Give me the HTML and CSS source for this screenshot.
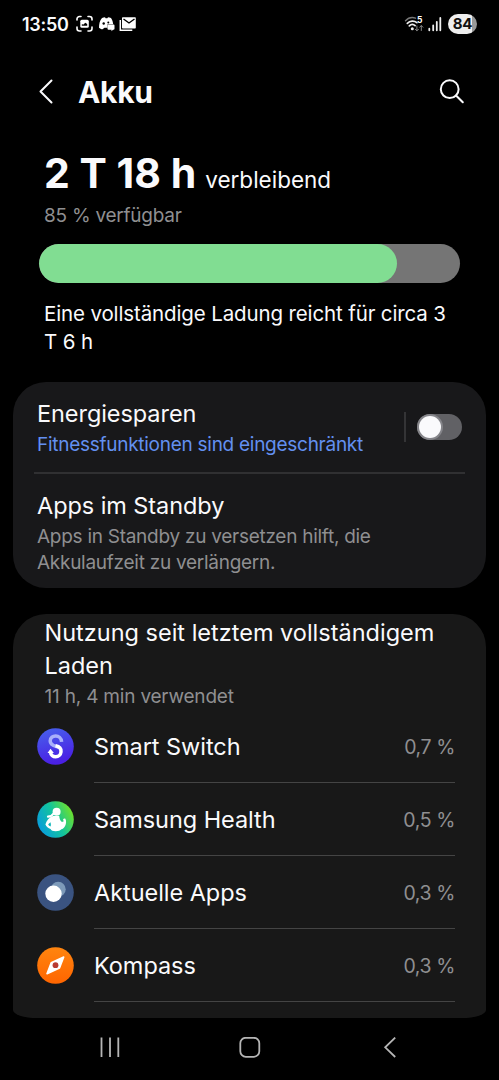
FILE: index.html
```html
<!DOCTYPE html>
<html lang="de">
<head>
<meta charset="utf-8">
<title>Akku</title>
<link rel="stylesheet" href="styles.css">
</head>
<body>
<div class="screen">
  <header class="status">
    <span class="clock">13:50</span>
    <svg class="status-left" width="62" height="18" viewBox="0 0 62 18">
      <g fill="none" stroke="#fff" stroke-width="1.6" stroke-linecap="round">
        <path d="M1 5V4a2.500 2.500 0 0 1 2.500-2.500H5M12 1.500h1.500A2.500 2.500 0 0 1 16 4v1M16 12v1.500A2.500 2.500 0 0 1 13.500 16H12M5 16H3.500A2.500 2.500 0 0 1 1 13.500V12"/>
      </g>
      <rect x="4.300" y="4.800" width="8.500" height="8" rx="1.500" fill="#fff"/>
      <path d="M5.800 10.800V9.300l1.800.3 1.600-1.900 2 1.200v1.900z" fill="#000"/>
      <path d="M26 3c1-.6 2-.8 3-.8l.6 1h1.800l.6-1c1 0 2 .2 3 .8 1.300 2 2 4 2.200 6.300h-5.700v3.500h-3l-2 1.500c-1.300-.2-2.600-.8-3.500-1.600 0-4 .8-7 3-9.700z" fill="#fff"/>
      <circle cx="27.700" cy="8.500" r="1.200" fill="#000"/><circle cx="32.300" cy="7.500" r="1" fill="#000"/>
      <path d="M32.500 9.500h5q1 0 1 1v3.300q0 1-1 1h-.5l-1.500 1.500v-1.500h-3q-1 0-1-1v-3.300q0-1 1-1z" fill="#fff"/>
      <path d="M44.300 5v10.200h12" fill="none" stroke="#fff" stroke-width="1.500"/>
      <rect x="46" y="2.200" width="13.800" height="11.400" rx=".8" fill="#fff"/>
      <path d="M47.500 4l5.500 4 5.500-4" fill="none" stroke="#000" stroke-width="1.400"/>
    </svg>
    <svg class="status-right" width="40" height="18" viewBox="0 0 40 18">
      <g fill="none" stroke-linecap="round">
        <path d="M1.500 5.800C4.300 2.800 8.500 2.100 11.500 3.200" stroke="#777" stroke-width="1.400"/>
        <path d="M3.300 8.300c2.700-2.800 7-2.900 9.600-.6M5.300 10.800c1.800-1.700 4.200-1.700 5.800-.1" stroke="#eee" stroke-width="1.700"/>
        <path d="M12.900 11v4.700m-1.600-1.500 1.600 1.600 1.600-1.600M17.300 15.500v-4.800m-1.600 1.500 1.600-1.600 1.600 1.600" stroke="#888" stroke-width="1"/>
        <path d="M25.300 13.700v1.600M29.200 10.500v4.800M32.800 6.800v8.500M36.300 3v12.300" stroke="#eee" stroke-width="1.800"/>
      </g>
      <circle cx="8.300" cy="13.800" r="1.500" fill="#eee"/>
      <text class="wifi-gen" x="12.900" y="8.300">5</text>
    </svg>
    <span class="battery">84</span>
  </header>

  <div class="title-bar">
    <svg width="16" height="26" viewBox="0 0 16 26"><path d="M13.500 1.500 2.500 12.500l11 11" class="line-icon"/></svg>
    <h1 class="title">Akku</h1>
    <svg width="26" height="26" viewBox="0 0 26 26"><circle cx="10.700" cy="10.200" r="8.900" class="line-icon"/><path d="m17 16.500 6.800 6.800" class="line-icon"/></svg>
  </div>

  <section class="summary">
    <div class="remaining"><strong class="time">2 T 18 h</strong><span class="left">verbleibend</span></div>
    <div class="available">85 % verfügbar</div>
    <div class="meter"><div class="meter-fill" style="width:85.1%"></div></div>
    <p class="forecast">Eine vollständige Ladung reicht für circa 3<br>T 6 h</p>
  </section>

  <section class="card settings">
    <div class="setting">
      <div class="setting-text">
        <div class="name">Energiesparen</div>
        <div class="detail accent">Fitnessfunktionen sind eingeschränkt</div>
      </div>
      <div class="switch-area"><div class="switch"><div class="knob"></div></div></div>
    </div>
    <div class="setting standby">
      <div class="setting-text">
        <div class="name">Apps im Standby</div>
        <div class="detail muted">Apps in Standby zu versetzen hilft, die<br>Akkulaufzeit zu verlängern.</div>
      </div>
    </div>
  </section>

  <section class="card usage">
    <h2 class="usage-title">Nutzung seit letztem vollständigem<br>Laden</h2>
    <div class="usage-time">11 h, 4 min verwendet</div>
    <ul class="apps">
      <li class="app">
        <svg width="37" height="37" viewBox="0 0 37 37">
          <defs><linearGradient id="switch-bg" x1="0" y1="0" x2=".3" y2="1"><stop stop-color="#4764ec"/><stop offset="1" stop-color="#4a20e4"/></linearGradient></defs>
          <circle cx="18.500" cy="18.500" r="18.300" fill="url(#switch-bg)"/>
          <path d="M24.600 13.900C24.200 6 13.200 6.300 13.200 13c0 5 5.200 4.700 8.600 6.400" fill="none" stroke="#a9b0fa" stroke-width="3.500"/>
          <path d="M18.500 17.800c3.800.7 5.800 2.700 5.500 6-.6 6.500-10 6.600-10.500.3" fill="none" stroke="#fff" stroke-width="3.500"/>
          <path d="m10.500 25 3-4.300 3.400 4.300z" fill="#fff"/>
        </svg>
        <div class="app-body"><span class="app-name">Smart Switch</span><span class="share">0,7 %</span></div>
      </li>
      <li class="app">
        <svg width="37" height="37" viewBox="0 0 37 37">
          <defs><linearGradient id="health-bg" x1="0" y1=".7" x2="1" y2=".2"><stop stop-color="#079be0"/><stop offset=".5" stop-color="#12c49c"/><stop offset="1" stop-color="#7be51c"/></linearGradient></defs>
          <circle cx="18.500" cy="18.500" r="18.300" fill="url(#health-bg)"/>
          <circle cx="19.600" cy="10.700" r="4" fill="#fff"/>
          <path d="M17 12c-1.500 2.300-3.700 3.700-6 3.700" fill="none" stroke="#fff" stroke-width="2.200" stroke-linecap="round"/>
          <path d="M16 15h6.200c.2 2.500 1 4.800 2.800 6l1.800-.7-.8-1.500c.5-1.200 1.500-1.500 2.400-1 1.200 2.500.9 5.700-.9 8.200-.8 1.100-1.900 1.900-3.100 2.200-1 1.300-3 2-5.700 2-2.800 0-4.600-.7-5.100-2.200-2.500-.8-4.200-2.200-5.200-4.500 1-3.900 3.800-7.200 7.600-8.500z" fill="#fff"/>
          <path d="m13.500 21.300-2.300 1.900c.4 1.200 1.300 1.800 2.500 2.200.3-1.300.2-2.800-.2-4.100z" fill="#0ab5ba"/>
        </svg>
        <div class="app-body"><span class="app-name">Samsung Health</span><span class="share">0,5 %</span></div>
      </li>
      <li class="app">
        <svg width="37" height="37" viewBox="0 0 37 37">
          <circle cx="18.500" cy="18.500" r="18.300" fill="#3a5380"/>
          <circle cx="21.200" cy="15.200" r="7.500" fill="#7d9ab9"/>
          <circle cx="16.500" cy="19.700" r="8.200" fill="#fff"/>
        </svg>
        <div class="app-body"><span class="app-name">Aktuelle Apps</span><span class="share">0,3 %</span></div>
      </li>
      <li class="app">
        <svg width="37" height="37" viewBox="0 0 37 37">
          <defs><linearGradient id="compass-bg" x1="0" y1="0" x2="0" y2="1"><stop stop-color="#ff850f"/><stop offset="1" stop-color="#ff6500"/></linearGradient></defs>
          <circle cx="18.500" cy="18.500" r="18.300" fill="url(#compass-bg)"/>
          <path d="M10 26.700 14.200 15.800 26.700 10 22.500 20.900z" fill="#fff" stroke="#fff" stroke-width="1.600" stroke-linejoin="round"/>
          <circle cx="18.500" cy="18.200" r="2.900" fill="#b93b32"/>
        </svg>
        <div class="app-body"><span class="app-name">Kompass</span><span class="share">0,3 %</span></div>
      </li>
    </ul>
  </section>

  <nav class="nav">
    <svg width="22" height="22" viewBox="0 0 22 22"><path d="M2.500 .5v19.500M11 .5v19.500M19.300 .5v19.500" class="nav-icon"/></svg>
    <svg width="22" height="22" viewBox="0 0 22 22"><rect x="1.300" y=".8" width="19" height="19" rx="5.500" class="nav-icon"/></svg>
    <svg width="22" height="22" viewBox="0 0 22 22"><path d="M17.200 .6 7.200 10.300l10 9.700" class="nav-icon"/></svg>
  </nav>
</div>
</body>
</html>
```
FILE: styles.css
```css
* { box-sizing: border-box; }
body {
  margin: 0;
  background: #000;
  color: #fafafc;
  font-family: Inter, "Liberation Sans", sans-serif;
}
h1, h2, p, ul { margin: 0; padding: 0; font-weight: 400; }
svg { display: block; flex: none; }
.screen {
  width: 499px;
  height: 1080px;
  overflow: hidden;
  display: flex;
  flex-direction: column;
  white-space: nowrap;
}

.status { height: 48px; padding: 0 22px; display: flex; align-items: center; }
.clock { font-size: 18px; font-weight: 600; letter-spacing: -.3px; width: 54px; }
.status-right { margin-left: auto; }
.wifi-gen { font-size: 8.500px; font-weight: 700; fill: #fff; }
.battery {
  margin-left: 4px;
  width: 29px;
  height: 20px;
  border-radius: 10px;
  background: linear-gradient(90deg, #eee 84%, #999 84%);
  color: #111;
  font-size: 15px;
  font-weight: 700;
  letter-spacing: -.3px;
  line-height: 20px;
  text-align: center;
}

.title-bar { height: 87px; padding: 0 34px 0 38px; display: flex; align-items: center; }
.title { flex: 1; margin-left: 24px; font-size: 30px; font-weight: 700; letter-spacing: -.3px; line-height: 36px; }
.line-icon { fill: none; stroke: #fafafc; stroke-width: 2; stroke-linecap: round; stroke-linejoin: round; }

.summary { height: 247px; padding: 17px 39px 0; }
.remaining { height: 42px; padding-left: 5px; display: flex; align-items: baseline; gap: 9px; line-height: 42px; }
.time { font-size: 41px; font-weight: 700; }
.left { font-size: 22.500px; }
.available { margin-top: 12px; padding-left: 5px; height: 20px; line-height: 20px; font-size: 19px; letter-spacing: -.25px; color: #8f8f91; }
.meter { margin-top: 18px; height: 39px; border-radius: 20px; background: #757575; overflow: hidden; }
.meter-fill { height: 100%; border-radius: 20px; background: #81dd92; }
.forecast { margin-top: 17px; padding-left: 5px; font-size: 20.500px; letter-spacing: -.13px; line-height: 28px; }

.card { width: 473px; margin-left: 13px; background: #18181a; flex: none; }
.settings { height: 206px; border-radius: 33px; padding: 0 21px; }
.setting { height: 92px; padding: 17px 3px 0 3px; display: flex; justify-content: space-between; border-bottom: 2px solid #303032; }
.standby { height: auto; border: 0; }
.name { font-size: 23.500px; letter-spacing: -.07px; line-height: 30px; }
.detail { font-size: 19px; letter-spacing: -.27px; line-height: 26px; margin-top: 3px; }
.accent { color: #6390f0; }
.muted { color: #8f8f91; }
.switch-area { height: 30px; margin-top: 13px; padding-left: 11px; border-left: 2px solid #343436; display: flex; align-items: center; }
.switch { width: 45px; height: 26px; padding: 2px; border-radius: 13px; background: #616165; }
.knob { width: 22px; height: 22px; border-radius: 50%; background: #fafafc; box-shadow: 0 0 0 2px #85858a; }

.usage { height: 404px; margin-top: 26px; padding: 2px 31px 0 23.500px; border-radius: 33px 33px 24px 24px / 33px 33px 8px 8px; background: #181818; }
.usage-title { padding-left: 8px; font-size: 23.500px; line-height: 33px; }
.usage-time { padding-left: 8px; margin-top: 5px; font-size: 19px; letter-spacing: -.2px; line-height: 20px; color: #8f8f91; }
.apps { list-style: none; margin-top: 3px; }
.app { height: 73px; display: flex; align-items: center; gap: 20.500px; }
.app-body { flex: 1; height: 73px; padding-top: 1px; border-bottom: 1px solid #444; display: flex; align-items: center; justify-content: space-between; }
.app-name { font-size: 23.500px; line-height: 30px; letter-spacing: -.05px; }
.share { font-size: 19.500px; line-height: 24px; letter-spacing: -.4px; color: #8f8f91; }

.nav { height: 60px; padding: 0 99px; display: flex; align-items: center; justify-content: space-between; }
.nav-icon { fill: none; stroke: #b5b5b5; stroke-width: 1.800; }
```
